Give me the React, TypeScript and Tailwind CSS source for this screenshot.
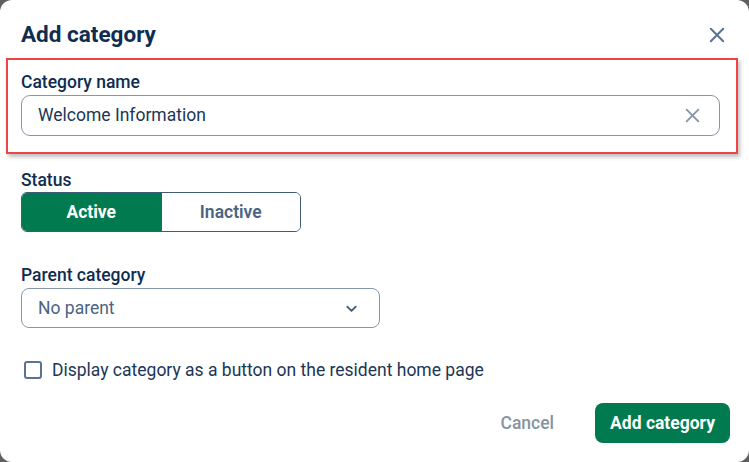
import React from 'react'

const font = { fontFamily: 'Roboto, "Noto Sans", sans-serif' }

function XIcon({ className }: { className?: string }) {
  return (
    <svg viewBox="0 0 16 16" className={className} fill="none" stroke="currentColor" strokeWidth={1.8} strokeLinecap="round">
      <path d="M2.5 2.5l11 11M13.5 2.5l-11 11" />
    </svg>
  )
}

function Chevron({ className }: { className?: string }) {
  return (
    <svg viewBox="0 0 16 16" className={className} fill="none" stroke="currentColor" strokeWidth={2} strokeLinecap="round" strokeLinejoin="round">
      <path d="M3.5 6l4.5 4.5L12.5 6" />
    </svg>
  )
}

export default function App() {
  const [status, setStatus] = React.useState<'active' | 'inactive'>('active')
  const [name, setName] = React.useState('Welcome Information')
  const [asButton, setAsButton] = React.useState(false)

  return (
    <div className="w-[749px] h-[462px] bg-[#5f5f5f]" style={font}>
      <div className="w-full h-full bg-white rounded-[12px] px-[21px] pt-[20px] flex flex-col">
        <div className="flex items-center justify-between h-[28px]">
          <h2 className="text-[22.5px] leading-[28px] font-bold text-[#0f2d4f]">Add category</h2>
          <button className="w-[18px] h-[18px] mr-[2px] mt-[2px] text-[#5b7390]" aria-label="Close">
            <XIcon className="w-[18px] h-[18px]" />
          </button>
        </div>

        {/* highlighted field */}
        <div className="mt-[10px] -ml-[15px] -mr-[10px] pl-[13px] pr-[16px] pt-[12px] pb-[16px] border-[2.5px] border-[#f04444] shadow-[2px_3px_4px_rgba(0,0,0,0.25)]">
          <label className="block text-[17.5px] leading-[20px] font-medium text-[#0f2d4f]">Category name</label>
          <div className="mt-[3px] h-[41px] flex items-center border border-[#8797ab] rounded-[9px] pl-[16px] pr-[18px]">
            <input
              value={name}
              onChange={(e) => setName(e.target.value)}
              className="flex-1 outline-none text-[17.5px] text-[#1b3656] bg-transparent"
              style={font}
            />
            <button className="w-[17px] h-[17px] text-[#8696aa]" aria-label="Clear" onClick={() => setName('')}>
              <XIcon className="w-[17px] h-[17px]" />
            </button>
          </div>
        </div>

        <label className="mt-[16px] block text-[17.5px] leading-[20px] font-medium text-[#0f2d4f]">Status</label>
        <div className="mt-[2px] w-[280px] h-[40px] flex border border-[#3f5a79] rounded-[6px] overflow-hidden">
          <button
            onClick={() => setStatus('active')}
            className={
              status === 'active'
                ? 'flex-1 bg-[#007a4e] text-white font-bold text-[17.5px]'
                : 'flex-1 bg-white text-[#4a6482] font-semibold text-[17.5px]'
            }
          >
            Active
          </button>
          <button
            onClick={() => setStatus('inactive')}
            className={
              status === 'inactive'
                ? 'flex-1 bg-[#007a4e] text-white font-bold text-[17.5px] border-l border-[#3f5a79]'
                : 'flex-1 bg-white text-[#4a6482] font-semibold text-[17.5px] border-l border-[#3f5a79]'
            }
          >
            Inactive
          </button>
        </div>

        <label className="mt-[33px] block text-[17.5px] leading-[20px] font-medium text-[#0f2d4f]">Parent category</label>
        <div className="mt-[3px] w-[359px] h-[40px] flex items-center justify-between border border-[#8797ab] rounded-[8px] pl-[16px] pr-[20px]">
          <span className="text-[17.5px] text-[#4a6482]">No parent</span>
          <Chevron className="w-[15px] h-[15px] text-[#3f5a79]" />
        </div>

        <label className="mt-[32px] h-[20px] flex items-center gap-[10px] ml-[3px] cursor-pointer">
          <input
            type="checkbox"
            checked={asButton}
            onChange={(e) => setAsButton(e.target.checked)}
            className="appearance-none w-[18px] h-[18px] border-2 border-[#5b7390] rounded-[3px] checked:bg-[#007a4e] checked:border-[#007a4e]"
          />
          <span className="text-[17.5px] text-[#1b3656]">Display category as a button on the resident home page</span>
        </label>

        <div className="mt-[23px] flex justify-end items-center gap-[41px] -mr-[2px]">
          <button className="text-[17.5px] font-medium text-[#8693a3]">Cancel</button>
          <button className="h-[40px] px-[15px] rounded-[8px] bg-[#007a4e] text-white text-[17.5px] font-bold">
            Add category
          </button>
        </div>
      </div>
    </div>
  )
}
